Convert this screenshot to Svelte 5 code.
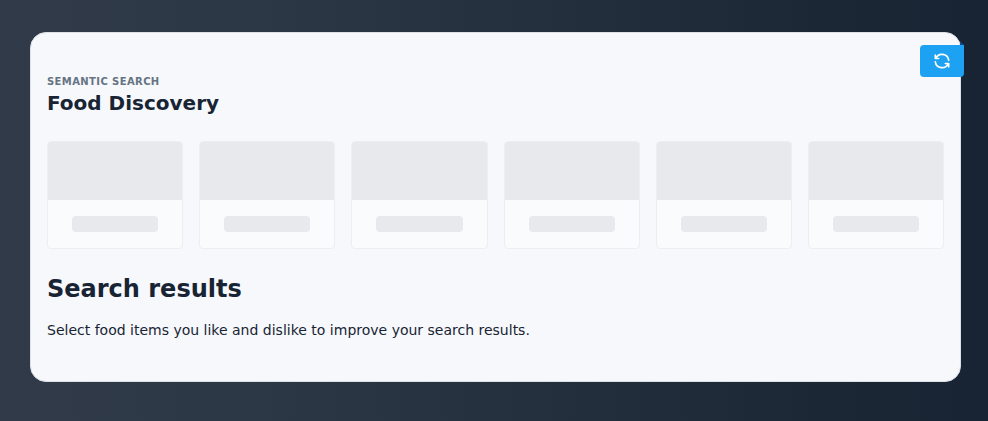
<script>
  const placeholders = Array.from({ length: 6 }, (_, i) => i);
</script>

<main class="page">
  <section class="card">
    <button class="ribbon" aria-label="Refresh">
      <svg width="20" height="20" viewBox="0 0 24 24" fill="none" stroke="currentColor" stroke-width="2" stroke-linecap="round" stroke-linejoin="round">
        <path d="M20 11a8.1 8.1 0 0 0 -15.5 -2m-.5 -4v4h4" />
        <path d="M4 13a8.1 8.1 0 0 0 15.5 2m.5 4v-4h-4" />
      </svg>
    </button>
    <header>
      <div class="pretitle">Semantic search</div>
      <h2>Food Discovery</h2>
    </header>
    <div class="row">
      {#each placeholders as id (id)}
        <div class="item">
          <div class="image"></div>
          <div class="body"><div class="bar"></div></div>
        </div>
      {/each}
    </div>
    <h1>Search results</h1>
    <p>Select food items you like and dislike to improve your search results.</p>
  </section>
</main>

<style>
  :global(body) {
    margin: 0;
    background: #182433;
  }
  .page {
    box-sizing: border-box;
    height: 421px;
    padding: 32px 27px 39px 30px;
    background: linear-gradient(90deg, #313a49 0%, #2c3845 25%, #1a2634 88%, #182433 100%);
    color: #182433;
    font-family: "DejaVu Sans", sans-serif;
    font-size: 14px;
    line-height: 20px;
  }
  .card {
    position: relative;
    box-sizing: border-box;
    height: 350px;
    padding: 41px 16px 0;
    border: 1px solid #dce1e7;
    border-radius: 16px;
    background: #f6f8fc;
  }
  .ribbon {
    position: absolute;
    top: 12px;
    right: -4px;
    display: flex;
    align-items: center;
    justify-content: center;
    width: 44px;
    height: 32px;
    padding: 0;
    border: 0;
    border-radius: 4px 0 4px 4px;
    background: #1da1f2;
    color: #fff;
  }
  .ribbon::before {
    content: "";
    position: absolute;
    right: 0;
    bottom: 100%;
    border: 2px solid;
    border-color: transparent transparent #17498a #17498a;
  }
  .pretitle {
    color: #667382;
    font-size: 10px;
    font-weight: 700;
    line-height: 16px;
    letter-spacing: 0.4px;
    text-transform: uppercase;
  }
  h2 {
    margin: 0;
    font-size: 20px;
    line-height: 26px;
  }
  .row {
    display: flex;
    gap: 16px;
    margin-top: 25px;
  }
  .item {
    box-sizing: border-box;
    flex: 1;
    height: 108px;
    overflow: hidden;
    border: 1px solid #eceef1;
    border-radius: 4px;
    background: #fafbfd;
  }
  .image {
    height: 58px;
    background: #e8e9ec;
  }
  .body {
    padding: 16px 24px;
  }
  .bar {
    height: 16px;
    border-radius: 4px;
    background: #e8e9ec;
  }
  h1 {
    margin: 24px 0 0;
    font-size: 24px;
    line-height: 32px;
  }
  p {
    margin: 15px 0 0;
  }
</style>
